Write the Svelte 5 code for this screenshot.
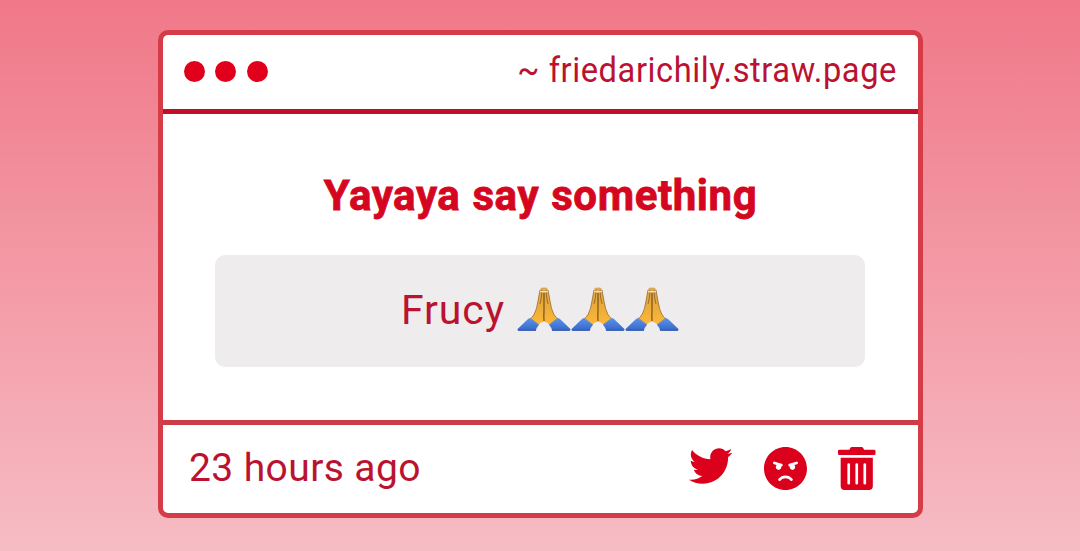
<script>
  const hands = [0, 1, 2];
</script>

<main>
  <article class="card">
    <header>
      <div class="dots"><i></i><i></i><i></i></div>
      <span class="site">~ friedarichily.straw.page</span>
    </header>
    <section>
      <h1>Yayaya say something</h1>
      <div class="answer">
        <span>Frucy</span>
        <div class="hands">
          {#each hands as n (n)}
            <svg width="54" height="45" viewBox="0 0 54 45">
              <defs>
                <linearGradient id="skin{n}" x1="0" y1="0" x2="0" y2="1">
                  <stop offset="0" stop-color="#d9a95a" />
                  <stop offset=".35" stop-color="#e5a73c" />
                  <stop offset="1" stop-color="#fdb938" />
                </linearGradient>
                <linearGradient id="cuff{n}" x1="0" y1="0" x2="0" y2="1">
                  <stop offset="0" stop-color="#5b93ea" />
                  <stop offset="1" stop-color="#3566c9" />
                </linearGradient>
              </defs>
              <g id="half{n}">
                <path d="M27 .8Q23.6-.2 23 3L20.8 15Q19.8 22 17.3 27Q15.5 30.3 13 32.2L20.8 38.5Q23.5 35.2 27 34.5Z" fill="url(#skin{n})" />
                <path d="M23 3L20.8 15Q19.8 22 17.3 27Q15.5 30.3 13 32.2" fill="none" stroke="#9b6c2d" stroke-width=".8" />
                <path d="M25 3Q24.8 11 23 17" fill="none" stroke="#80551f" stroke-width=".7" />
                <path d="M23 4.6H27" stroke="#f5dfa8" stroke-width="1.4" />
                <path d="M13 31Q11.8 31.2 10.5 32.5L.6 42Q0 43.6 1.6 43.7H18.9Q19.4 40.6 22 37.8Z" fill="url(#cuff{n})" />
                <path d="M13.2 31L22 37.8" stroke="#89949c" stroke-width=".9" />
                <path d="M1.2 43.2H18.8" stroke="#294f9f" stroke-width=".8" />
              </g>
              <use href="#half{n}" transform="translate(54 0) scale(-1 1)" />
              <path d="M27 6V24Q26.7 29 27 34" fill="none" stroke="#714716" stroke-width="1.1" />
            </svg>
          {/each}
        </div>
      </div>
    </section>
    <footer>
      <time>23 hours ago</time>
      <div class="actions">
        <svg class="bird" viewBox="0 48 512 416"><path d="M459.37 151.716c.325 4.548.325 9.097.325 13.645 0 138.72-105.583 298.558-298.558 298.558-59.452 0-114.68-17.219-161.137-47.106 8.447.974 16.568 1.299 25.34 1.299 49.055 0 94.213-16.568 130.274-44.832-46.132-.975-84.792-31.188-98.112-72.772 6.498.974 12.995 1.624 19.818 1.624 9.421 0 18.843-1.3 27.614-3.573-48.081-9.747-84.143-51.98-84.143-102.985v-1.299c13.969 7.797 30.214 12.67 47.431 13.319-28.264-18.843-46.781-51.005-46.781-87.391 0-19.492 5.197-37.36 14.294-52.954 51.655 63.675 129.3 105.258 216.365 109.807-1.624-7.797-2.599-15.918-2.599-24.04 0-57.828 46.782-104.934 104.934-104.934 30.213 0 57.502 12.67 76.67 33.137 23.715-4.548 46.456-13.32 66.599-25.34-7.798 24.366-24.366 44.833-46.132 57.827 21.117-2.273 41.584-8.122 60.426-16.243-14.292 20.791-32.161 39.308-52.628 54.253z" /></svg>
        <svg class="face" viewBox="0 8 496 496"><path d="M248 8C111 8 0 119 0 256s111 248 248 248 248-111 248-248S385 8 248 8zM136 240c0-9.3 4.1-17.5 10.5-23.4l-31-9.3c-8.5-2.5-13.3-11.5-10.7-19.9 2.5-8.5 11.4-13.2 19.9-10.7l80 24c8.5 2.5 13.3 11.5 10.7 19.9-2.1 6.9-8.4 11.4-15.3 11.4-.5 0-1.1-.2-1.7-.2.7 2.7 1.7 5.3 1.7 8.2 0 17.7-14.3 32-32 32S136 257.7 136 240zm168 154.2c-27.8-33.4-84.2-33.4-112.1 0-13.5 16.3-38.2-4.2-24.6-20.5 20-24 49.4-37.8 80.6-37.8s60.6 13.8 80.6 37.8c13.8 16.5-11.1 36.6-24.5 20.5zm76.6-186.9l-31 9.3c6.3 5.8 10.5 14.1 10.5 23.4 0 17.7-14.3 32-32 32s-32-14.3-32-32c0-2.9.9-5.6 1.7-8.2-.6.1-1.1.2-1.7.2-6.9 0-13.2-4.5-15.3-11.4-2.5-8.5 2.3-17.4 10.7-19.9l80-24c8.4-2.5 17.4 2.3 19.9 10.7 2.5 8.5-2.3 17.4-10.8 19.9z" /></svg>
        <svg class="bin" viewBox="0 0 448 512"><path d="M32 464a48 48 0 0 0 48 48h288a48 48 0 0 0 48-48V128H32zm272-256a16 16 0 0 1 32 0v224a16 16 0 0 1-32 0zm-96 0a16 16 0 0 1 32 0v224a16 16 0 0 1-32 0zm-96 0a16 16 0 0 1 32 0v224a16 16 0 0 1-32 0zM432 32H312l-9.4-18.7A24 24 0 0 0 281.1 0H166.8a23.72 23.72 0 0 0-21.4 13.3L136 32H16A16 16 0 0 0 0 48v32a16 16 0 0 0 16 16h416a16 16 0 0 0 16-16V48a16 16 0 0 0-16-16z" /></svg>
      </div>
    </footer>
  </article>
</main>

<style>
  :global(body) { margin: 0; }
  main {
    box-sizing: border-box;
    height: 551px;
    padding: 30px 157px 33px 158px;
    background: linear-gradient(#f07888, #f6bcc4);
    font-family: Roboto, sans-serif;
    color: #ba1230;
  }
  .card {
    box-sizing: border-box;
    height: 488px;
    border: 5px solid #d63c48;
    border-radius: 10px;
    background: #fff;
    display: flex;
    flex-direction: column;
  }
  header {
    box-sizing: border-box;
    height: 79px;
    border-bottom: 5px solid #c20f27;
    display: flex;
    align-items: center;
    justify-content: space-between;
    padding: 0 21px 2px;
  }
  .dots { display: flex; gap: 10.4px; }
  .dots i { width: 21px; height: 21px; border-radius: 50%; background: #e0001b; }
  .site {
    font-size: 35px;
    letter-spacing: .6px;
    line-height: 40px;
    white-space: nowrap;
    transform: scaleX(.933);
    transform-origin: right;
  }
  section {
    flex: 1;
    display: flex;
    flex-direction: column;
    align-items: center;
  }
  h1 {
    margin: 57px 0 0;
    font-size: 42px;
    line-height: 50px;
    font-weight: 700;
    letter-spacing: .6px;
    word-spacing: 1px;
    color: #d50620;
    -webkit-text-stroke: .8px #d50620;
    white-space: nowrap;
  }
  .answer {
    box-sizing: border-box;
    width: 650px;
    height: 112px;
    margin: 34px 1px 0 0;
    padding-bottom: 2px;
    border-radius: 10px;
    background: #eeecec;
    display: flex;
    align-items: center;
    justify-content: center;
    font-size: 41px;
    letter-spacing: .9px;
  }
  .hands { display: flex; margin: 0 0 2px 12px; }
  footer {
    box-sizing: border-box;
    height: 93px;
    border-top: 5px solid #cc3d48;
    display: flex;
    align-items: center;
    justify-content: space-between;
    padding: 0 42.5px 2px 26px;
  }
  time { font-size: 39px; letter-spacing: .4px; }
  .actions { display: flex; align-items: center; }
  .actions svg { fill: #db001b; }
  .bird { width: 43.5px; height: 36px; margin: 0 32px 4px 0; }
  .face { width: 43px; height: 43px; margin-right: 31px; }
  .bin { width: 37.5px; height: 43px; }
</style>
